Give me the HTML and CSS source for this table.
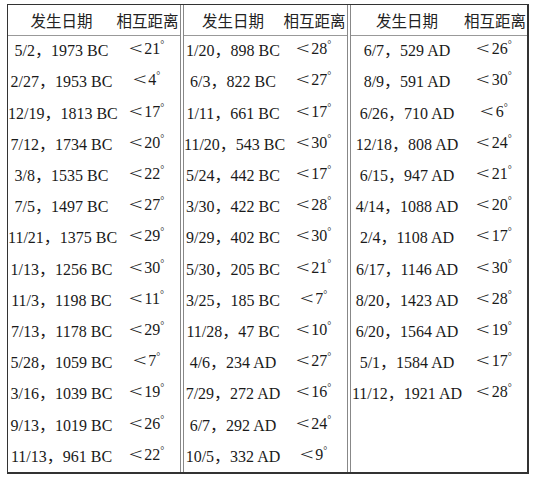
FILE: index.html
```html
<!DOCTYPE html>
<html>
<head>
<meta charset="utf-8">
<link rel="stylesheet" href="styles.css">
</head>
<body>
<div class="table">
  <div class="sec s1">
    <div class="h">发生日期</div><div class="h">相互距离</div>
    <div class="d">5/2，1973 BC</div><div class="a"><span class="lt">&lt;</span>21<sup>°</sup></div>
    <div class="d">2/27，1953 BC</div><div class="a"><span class="lt">&lt;</span>4<sup>°</sup></div>
    <div class="d">12/19，1813 BC</div><div class="a"><span class="lt">&lt;</span>17<sup>°</sup></div>
    <div class="d">7/12，1734 BC</div><div class="a"><span class="lt">&lt;</span>20<sup>°</sup></div>
    <div class="d">3/8，1535 BC</div><div class="a"><span class="lt">&lt;</span>22<sup>°</sup></div>
    <div class="d">7/5，1497 BC</div><div class="a"><span class="lt">&lt;</span>27<sup>°</sup></div>
    <div class="d">11/21，1375 BC</div><div class="a"><span class="lt">&lt;</span>29<sup>°</sup></div>
    <div class="d">1/13，1256 BC</div><div class="a"><span class="lt">&lt;</span>30<sup>°</sup></div>
    <div class="d">11/3，1198 BC</div><div class="a"><span class="lt">&lt;</span>11<sup>°</sup></div>
    <div class="d">7/13，1178 BC</div><div class="a"><span class="lt">&lt;</span>29<sup>°</sup></div>
    <div class="d">5/28，1059 BC</div><div class="a"><span class="lt">&lt;</span>7<sup>°</sup></div>
    <div class="d">3/16，1039 BC</div><div class="a"><span class="lt">&lt;</span>19<sup>°</sup></div>
    <div class="d">9/13，1019 BC</div><div class="a"><span class="lt">&lt;</span>26<sup>°</sup></div>
    <div class="d">11/13，961 BC</div><div class="a"><span class="lt">&lt;</span>22<sup>°</sup></div>
  </div>
  <div class="sec s2">
    <div class="h">发生日期</div><div class="h">相互距离</div>
    <div class="d">1/20，898 BC</div><div class="a"><span class="lt">&lt;</span>28<sup>°</sup></div>
    <div class="d">6/3，822 BC</div><div class="a"><span class="lt">&lt;</span>27<sup>°</sup></div>
    <div class="d">1/11，661 BC</div><div class="a"><span class="lt">&lt;</span>17<sup>°</sup></div>
    <div class="d">11/20，543 BC</div><div class="a"><span class="lt">&lt;</span>30<sup>°</sup></div>
    <div class="d">5/24，442 BC</div><div class="a"><span class="lt">&lt;</span>17<sup>°</sup></div>
    <div class="d">3/30，422 BC</div><div class="a"><span class="lt">&lt;</span>28<sup>°</sup></div>
    <div class="d">9/29，402 BC</div><div class="a"><span class="lt">&lt;</span>30<sup>°</sup></div>
    <div class="d">5/30，205 BC</div><div class="a"><span class="lt">&lt;</span>21<sup>°</sup></div>
    <div class="d">3/25，185 BC</div><div class="a"><span class="lt">&lt;</span>7<sup>°</sup></div>
    <div class="d">11/28，47 BC</div><div class="a"><span class="lt">&lt;</span>10<sup>°</sup></div>
    <div class="d">4/6，234 AD</div><div class="a"><span class="lt">&lt;</span>27<sup>°</sup></div>
    <div class="d">7/29，272 AD</div><div class="a"><span class="lt">&lt;</span>16<sup>°</sup></div>
    <div class="d">6/7，292 AD</div><div class="a"><span class="lt">&lt;</span>24<sup>°</sup></div>
    <div class="d">10/5，332 AD</div><div class="a"><span class="lt">&lt;</span>9<sup>°</sup></div>
  </div>
  <div class="sec s3">
    <div class="h">发生日期</div><div class="h">相互距离</div>
    <div class="d">6/7，529 AD</div><div class="a"><span class="lt">&lt;</span>26<sup>°</sup></div>
    <div class="d">8/9，591 AD</div><div class="a"><span class="lt">&lt;</span>30<sup>°</sup></div>
    <div class="d">6/26，710 AD</div><div class="a"><span class="lt">&lt;</span>6<sup>°</sup></div>
    <div class="d">12/18，808 AD</div><div class="a"><span class="lt">&lt;</span>24<sup>°</sup></div>
    <div class="d">6/15，947 AD</div><div class="a"><span class="lt">&lt;</span>21<sup>°</sup></div>
    <div class="d">4/14，1088 AD</div><div class="a"><span class="lt">&lt;</span>20<sup>°</sup></div>
    <div class="d">2/4，1108 AD</div><div class="a"><span class="lt">&lt;</span>17<sup>°</sup></div>
    <div class="d">6/17，1146 AD</div><div class="a"><span class="lt">&lt;</span>30<sup>°</sup></div>
    <div class="d">8/20，1423 AD</div><div class="a"><span class="lt">&lt;</span>28<sup>°</sup></div>
    <div class="d">6/20，1564 AD</div><div class="a"><span class="lt">&lt;</span>19<sup>°</sup></div>
    <div class="d">5/1，1584 AD</div><div class="a"><span class="lt">&lt;</span>17<sup>°</sup></div>
    <div class="d">11/12，1921 AD</div><div class="a"><span class="lt">&lt;</span>28<sup>°</sup></div>
    <div class="d"></div><div class="a"></div>
    <div class="d"></div><div class="a"></div>
  </div>
</div>
</body>
</html>
```

FILE: styles.css
```css
html, body {
  margin: 0;
  padding: 0;
  background: #fff;
}
body {
  font-family: "Liberation Serif", "Noto Sans CJK SC", serif;
  font-size: 16px;
  color: #1a1a1a;
}
.table {
  display: flex;
  margin: 4px 0 0 7px;
  width: 522px;
  border-top: 1px solid #333;
  border-left: 1px solid #333;
  border-right: 2px solid #333;
  border-bottom: 2px solid #333;
  box-sizing: border-box;
  height: 470px;
}
.sec {
  display: grid;
  grid-template-rows: 30px repeat(14, 1fr);
  align-items: center;
}
.s1 {
  grid-template-columns: 107px 65px;
  border-right: 1px solid #888;
}
.s2 {
  grid-template-columns: 98px 65px;
  margin-left: 2px;
  border-left: 1px solid #888;
  border-right: 1px solid #888;
}
.s3 {
  grid-template-columns: 112px 64px;
  margin-left: 2px;
  border-left: 1px solid #888;
}
.h {
  font-family: "Noto Sans CJK SC", sans-serif;
  font-size: 15.5px;
  white-space: nowrap;
  height: 100%;
  display: flex;
  align-items: center;
  justify-content: center;
  border-bottom: 1px solid #999;
  color: #222;
}
.d, .a {
  text-align: center;
  white-space: nowrap;
}
.d {
  padding-bottom: 3px;
}
.a {
  padding-bottom: 3px;
}
.lt {
  display: inline-block;
  font-size: 17px;
  margin-right: 4px;
  transform: scaleX(1.45);
}
sup {
  font-size: 10px;
  vertical-align: 6px;
  line-height: 0;
}
```
